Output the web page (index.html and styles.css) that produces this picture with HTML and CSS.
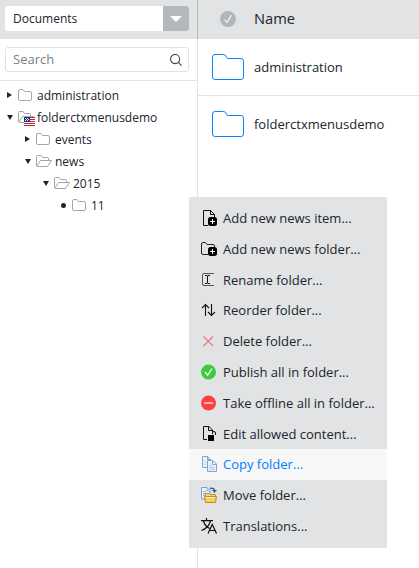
FILE: index.html
```html
<!DOCTYPE html>
<html lang="en">
<head>
<meta charset="utf-8">
<title>Documents</title>
<link rel="stylesheet" href="styles.css">
</head>
<body>
<svg width="0" height="0" class="defs">
  <symbol id="closed" viewBox="0 0 14 12"><path d="M.5 2Q.5.5 2 .5H5L6.500 2.500H12Q13.500 2.500 13.500 4V10Q13.500 11.500 12 11.500H2Q.5 11.500.5 10Z" fill="none" stroke="#a3a6a9"/></symbol>
  <symbol id="open" viewBox="0 0 16 12"><path d="M12.500 5V3.500Q12.500 2.500 11.500 2.500H6.500L5 .5H1.500Q.5.5.5 1.500V10.500Q.5 11.500 1.500 11.500H11.500L15.500 5.500H4.500L1 11" fill="none" stroke="#a3a6a9"/></symbol>
  <symbol id="big" viewBox="0 0 32 26"><path d="M.5 3Q.5.5 3 .5H11.500Q14 .5 14.500 3.500Q14.700 4.500 16 4.500H29Q31.500 4.500 31.500 7V23Q31.500 25.500 29 25.500H3Q.5 25.500.5 23Z" fill="none" stroke="#0a84ff"/></symbol>
</svg>
<div class="app">
  <aside class="side">
    <div class="top">
      <div class="select"><span>Documents</span><i><svg width="12" height="6"><path d="M0 0H12L6 6Z" fill="#fff"/></svg></i></div>
    </div>
    <div class="search-area">
      <div class="search"><span>Search</span>
        <svg width="12" height="12" viewBox="0 0 13 13" fill="none" stroke="#3c4247" stroke-width="1.2"><circle cx="5.500" cy="5.500" r="4.900"/><path d="M9 9L12.500 12.500"/></svg></div>
    </div>
    <ul class="tree">
      <li><b class="right"></b><svg width="14" height="12"><use href="#closed"/></svg><span>administration</span></li>
      <li><b class="down"></b><svg width="16" height="12"><use href="#open" width="16" height="12"/><g shape-rendering="crispEdges"><path d="M6 6H17V15H6Z" fill="#fff"/><path d="M6 6.500H17M6 8.500H17M6 10.500H17M6 12.500H17M6 14.500H17" stroke="#c8202c"/><path d="M6 6H12V11H6Z" fill="#1b3a86"/><path d="M7 7h1v1H7ZM9 7h1v1H9ZM8 8h1v1H8ZM10 8h1v1h-1ZM7 9h1v1H7ZM9 9h1v1H9Z" fill="#dbe5f7"/></g></svg><span>folderctxmenusdemo</span></li>
      <li class="l1"><b class="right"></b><svg width="14" height="12"><use href="#closed"/></svg><span>events</span></li>
      <li class="l1"><b class="down"></b><svg width="16" height="12"><use href="#open"/></svg><span>news</span></li>
      <li class="l2"><b class="down"></b><svg width="16" height="12"><use href="#open"/></svg><span>2015</span></li>
      <li class="l3"><b class="dot"></b><svg width="14" height="12"><use href="#closed"/></svg><span>11</span></li>
    </ul>
  </aside>
  <main class="list">
    <div class="head"><svg width="16" height="16"><circle cx="8" cy="8" r="8" fill="#b2b6b9"/><path d="M4.500 8.500L7 11.300L11.500 4.300" fill="none" stroke="#fff" stroke-width="1.100"/></svg><span>Name</span></div>
    <div class="item line"><svg width="32" height="26"><use href="#big"/></svg><span>administration</span></div>
    <div class="item"><svg width="32" height="26"><use href="#big"/></svg><span>folderctxmenusdemo</span></div>
  </main>
</div>
<ul class="menu">
  <li><svg width="16" height="16" fill="none" stroke="#111"><path d="M7 15.500H2.500V.5H9.500L13.500 4.500V7M9.500.5V4.500H13.500"/><rect x="7" y="7" width="9" height="9" rx="2.500" fill="#000" stroke="none"/><path d="M11.500 9V14M9 11.500H14" stroke="#fff"/></svg><span>Add new news item...</span></li>
  <li><svg width="16" height="16" fill="none" stroke="#222"><path d="M7 13.500H2Q.5 13.500.5 12V3Q.5 1.500 2 1.500H4.500L6 3.500H12Q13.500 3.500 13.500 5V6"/><rect x="7" y="6" width="9" height="9" rx="2.500" fill="#000" stroke="none"/><path d="M11.500 8V13M9 10.500H14" stroke="#fff"/></svg><span>Add new news folder...</span></li>
  <li><svg width="16" height="16" fill="none" stroke="#555"><path d="M13 1.500H3Q1.500 1.500 1.500 3V12Q1.500 13.500 3 13.500H13"/><path d="M4 3.500H6L6.500 4L7 3.500H9M6.500 4V11M4 11.500H6L6.500 11L7 11.500H9" stroke="#111"/></svg><span>Rename folder...</span></li>
  <li><svg width="16" height="16" fill="none" stroke="#111" stroke-width="1.100"><path d="M4.500 14V2.500M1 6L4.500 2.500L8 6M10.500 2V13.500M7 10L10.500 13.500L14 10"/></svg><span>Reorder folder...</span></li>
  <li><svg width="16" height="16" fill="none" stroke="#ef7474" stroke-width="1.100"><path d="M2.500 3.500L12 13M12 3.500L2.500 13"/></svg><span>Delete folder...</span></li>
  <li><svg width="16" height="16"><circle cx="7.500" cy="8" r="7.500" fill="#3fc93f"/><path d="M4 8L6.700 11.200L11 4.500" fill="none" stroke="#fff" stroke-width="1.200"/></svg><span>Publish all in folder...</span></li>
  <li><svg width="16" height="16"><circle cx="7.500" cy="8" r="7.500" fill="#ff4040"/><path d="M3 8H12" stroke="#fff" stroke-width="1.200"/></svg><span>Take offline all in folder...</span></li>
  <li><svg width="16" height="16" fill="none" stroke="#111"><path d="M6 13.500H2.500V.5H8L11.500 4V6M7.500.5V4.500H11.500M11.500 8V7Q11.500 5.500 13 5.500Q14.500 5.500 14.500 7V9"/><path d="M7 9H13V15H7Z" fill="#000" stroke="none"/></svg><span>Edit allowed content...</span></li>
  <li class="on"><svg width="16" height="16" fill="#e9f1fb" stroke="#8ba5c9"><path d="M1.500.5H6.500L9.500 3.500V11.500H1.500Z"/><path d="M6.500.5V3.500H9.500" fill="none"/><path d="M3 4.500H5M3 6.500H6M3 8.500H6" fill="none" stroke="#cfdef1"/><path d="M6.500 4.500H12L15.500 8V15.500H6.500Z"/><path d="M11.500 5V8.500H15" fill="none"/><path d="M8 9.500H11M8 11.500H14M8 13.500H14" fill="none" stroke="#b3cae8"/></svg><span>Copy folder...</span></li>
  <li><svg width="16" height="16"><path d="M.5.5H6L9 3.500V12H.5Z" fill="#e9f1fb" stroke="#7da0cf"/><path d="M2 4.500H5M2 6.500H5M2 8.500H5M6 .5V4H9" fill="none" stroke="#8fb1dc"/><path d="M9 1.500Q13.500.5 13.500 4" fill="none" stroke="#24649b" stroke-width="1.400"/><path d="M11 3H16L13.500 6Z" fill="#24649b"/><path d="M4.500 14V7Q4.500 6.500 5 6.500H8L9 7.500H14Q14.500 7.500 14.500 8V14Z" fill="#f5d878" stroke="#c08a26"/><path d="M4.500 15.500L3.500 9.500H15.500L14.500 15.500Z" fill="#f6cf60" stroke="#c08a26"/><path d="M5 10.500H14" stroke="#fff0b8"/></svg><span>Move folder...</span></li>
  <li><svg width="16" height="16" fill="none" stroke="#111" stroke-width="1.200"><path d="M0 2.600H12M5.500 0V2.500M2.500 3Q4 9 9 10.500M9.500 3Q7.500 10 .5 12.500M7 15.500L11.300 6.500L15.500 15.500M8.500 12.500H14"/></svg><span>Translations...</span></li>
</ul>
</body>
</html>
```
FILE: styles.css
```css
* { box-sizing: border-box; }
body { margin: 0; width: 419px; height: 568px; overflow: hidden; background: #fff; color: #20252a; font: 13px/22px "Open Sans", "Noto Sans", sans-serif; }
ul { list-style: none; margin: 0; padding: 0; }
svg { display: block; flex: none; overflow: visible; }
.defs { position: absolute; }
.app { display: flex; height: 568px; }
.side { width: 198px; border-right: 1px solid #e1e3e5; flex: none; }
.top { height: 39px; width: 198px; padding: 6px 0 0 5px; background: #e1e3e5; border-right: 1px solid #b4b8bb; }
.select { display: flex; justify-content: space-between; width: 184px; height: 25px; border-radius: 3px; overflow: hidden; background: #fff; font-size: 12px; }
.select span { padding-left: 8px; line-height: 26px; }
.select i { width: 26px; background: #b4b8bb; display: flex; align-items: center; justify-content: center; }
.search-area { height: 42px; padding: 8px 0 0 5px; border-bottom: 1px solid #e1e3e5; }
.search { display: flex; align-items: center; justify-content: space-between; width: 184px; height: 25px; padding: 0 6px 0 7px; border: 1px solid #dfe1e3; border-radius: 3px; color: #7b8085; }
.search span { padding-bottom: 2px; }
.tree { padding-top: 3px; font-size: 12px; }
.tree li { display: grid; grid-template-columns: 11px 19px 1fr; align-items: center; height: 22px; padding-left: 7px; }
.tree span { line-height: 20px; padding-top: 2px; }
.tree li.l1 { padding-left: 25px; }
.tree li.l2 { padding-left: 43px; }
.tree li.l3 { padding-left: 61px; }
.right { width: 5px; border: 3px solid transparent; border-left: 5px solid #20252a; border-right: 0; }
.down { width: 6px; border: 3px solid transparent; border-top: 5px solid #20252a; border-bottom: 0; }
.dot { width: 5px; height: 5px; border-radius: 50%; background: #20252a; }
.list { flex: 1; }
.head { display: flex; align-items: center; height: 39px; padding: 0 0 1px 22px; background: #e1e3e5; font-size: 14.7px; }
.head span { margin-left: 18px; padding-bottom: 2px; }
.item { display: flex; align-items: center; height: 57px; padding-left: 14px; }
.item span { margin-left: 10px; }
.line { border-bottom: 1px solid #e1e3e5; }
.line + .item { height: 56px; }
.menu { position: absolute; left: 189px; top: 197px; width: 198px; height: 351px; padding: 5.6px 0 6px; background: #e1e3e5; }
.menu li { display: flex; align-items: center; height: 30.8px; padding-left: 12px; }
.menu span { margin-left: 6px; white-space: nowrap; }
.menu .on { background: #f7f7f7; color: #0080ff; }
```
